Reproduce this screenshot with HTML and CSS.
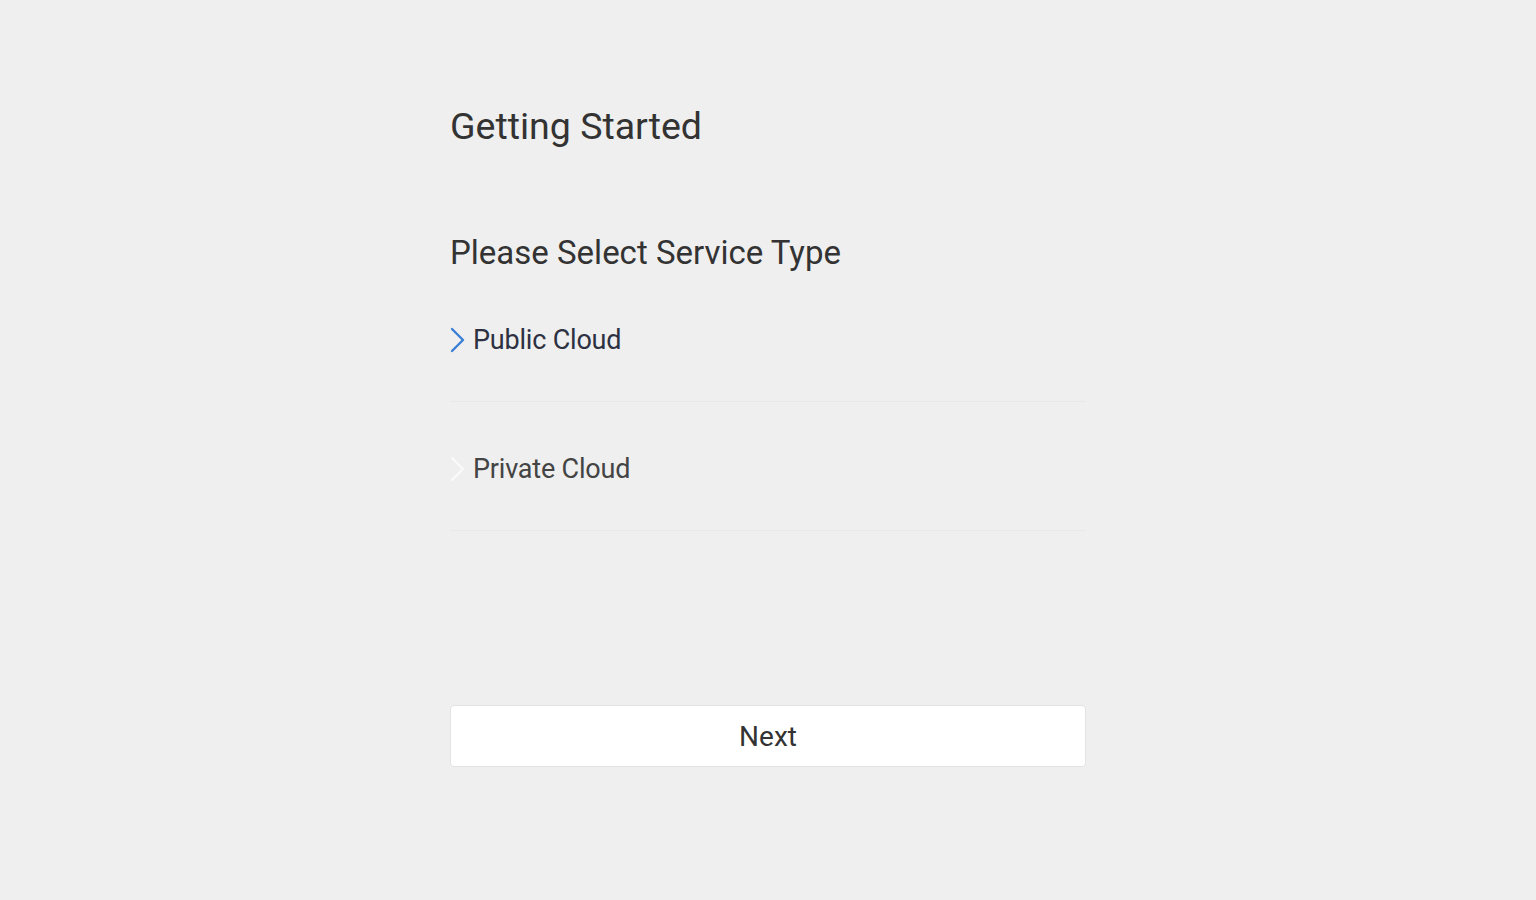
FILE: index.html
```html
<!DOCTYPE html>
<html lang="en">
<head>
    <meta charset="UTF-8">
    <meta name="viewport" content="width=device-width, initial-scale=1.0">
    <title>Getting Started</title>
    <link rel="stylesheet" href="styles.css">
</head>
<body>
    <div class="container">
        <h1 class="title">Getting Started</h1>
        <h2 class="subtitle">Please Select Service Type</h2>
        <ul class="options">
            <li class="option selected">
                <svg class="chevron" width="18" height="26" viewBox="0 0 18 26"><polyline points="3,2 14,13 3,24" fill="none" stroke-width="2.4" stroke-linecap="round" stroke-linejoin="round"/></svg>
                <span>Public Cloud</span>
            </li>
            <li class="option">
                <svg class="chevron" width="18" height="26" viewBox="0 0 18 26"><polyline points="3,2 14,13 3,24" fill="none" stroke-width="2.4" stroke-linecap="round" stroke-linejoin="round"/></svg>
                <span>Private Cloud</span>
            </li>
        </ul>
        <button class="next-btn">Next</button>
    </div>
</body>
</html>
```

FILE: styles.css
```css
body {
    font-family: Roboto, "Liberation Sans", sans-serif;
    background-color: #efefef;
    margin: 0;
    padding: 0;
    color: #333;
}
.container {
    width: 636px;
    margin: 0 auto;
    padding-top: 106px;
}
.title {
    margin: 0;
    font-size: 37.5px;
    font-weight: 400;
    line-height: 40px;
    color: #333;
}
.subtitle {
    margin: 87px 0 0;
    font-size: 33px;
    font-weight: 400;
    line-height: 40px;
    color: #333;
}
.options {
    list-style: none;
    margin: 0;
    padding: 0;
}
.option {
    height: 129px;
    display: flex;
    align-items: center;
    gap: 6px;
    padding-top: 5px;
    box-sizing: border-box;
    border-bottom: 1px solid #e8e8e8;
    font-size: 27px;
    letter-spacing: -0.2px;
    color: #444;
}
.option .chevron {
    margin-left: -1px;
    stroke: #fafafa;
}
.option.selected {
    color: #2d3142;
}
.option.selected .chevron {
    stroke: #3a7fd5;
}
.next-btn {
    display: block;
    width: 100%;
    height: 62px;
    margin-top: 174px;
    background: #fff;
    border: 1px solid #e4e4e4;
    border-radius: 4px;
    font-family: inherit;
    font-size: 28px;
    color: #333;
    cursor: pointer;
}
```
